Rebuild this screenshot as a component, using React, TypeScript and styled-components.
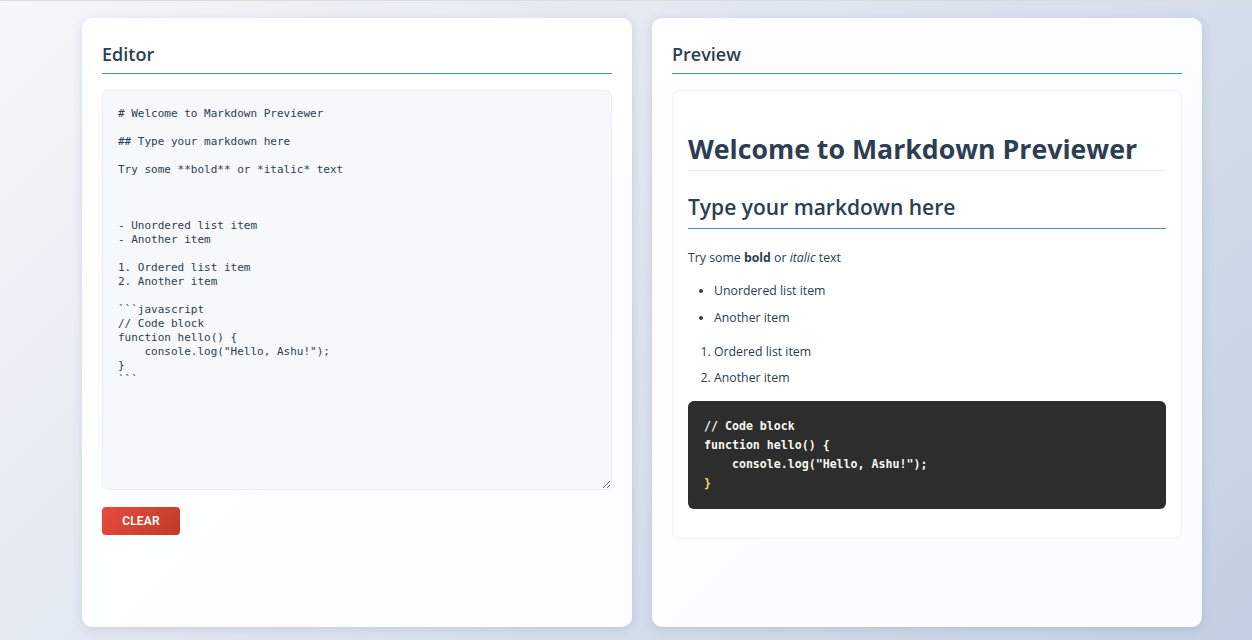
import React, { useState } from "react";
import styled, { createGlobalStyle } from "styled-components";

const GlobalStyle = createGlobalStyle`
  html, body { margin: 0; padding: 0; }
  body {
    font-family: "Open Sans", "Noto Sans", sans-serif;
    background: linear-gradient(135deg, #f5f7fa 0%, #c3cfe2 100%);
    min-height: 640px;
    border-top: 1px solid #dcdcdc;
    box-sizing: border-box;
  }
  * { box-sizing: border-box; }
`;

const Page = styled.div`
  display: flex;
  gap: 20px;
  padding: 17px 50px 0 82px;
  height: 639px;
`;

const Card = styled.section`
  width: 550px;
  height: 609px;
  background: rgba(255, 255, 255, 0.92);
  border-radius: 10px;
  box-shadow: 0 2px 10px rgba(60, 80, 120, 0.15);
  padding: 20px;
  display: flex;
  flex-direction: column;
`;

const Title = styled.h2`
  margin: 0 0 16px;
  font-size: 18px;
  font-weight: 600;
  color: #2c3e50;
  line-height: 28px;
  padding: 2px 0 5px;
  border-bottom: 1px solid #3b8ed0;
`;

const Editor = styled.textarea`
  width: 100%;
  height: 400px;
  resize: vertical;
  background: #f7f8fa;
  border: 1px solid #eceef1;
  border-radius: 6px;
  padding: 16px 15px 15px;
  font-family: "DejaVu Sans Mono", monospace;
  font-size: 11px;
  line-height: 14px;
  color: #2c3e50;
  outline: none;
  display: block;
`;

const ClearButton = styled.button`
  margin-top: 17px;
  align-self: flex-start;
  width: 78px;
  height: 28px;
  border: none;
  border-radius: 4px;
  background: linear-gradient(135deg, #e74c3c, #c0392b);
  color: #fff;
  font-family: "Roboto", "Liberation Sans", sans-serif;
  font-weight: 600;
  font-size: 12px;
  letter-spacing: 0.2px;
  cursor: pointer;
`;

const PreviewBox = styled.div`
  border: 1px solid #f1f2f4;
  border-radius: 8px;
  background: #fff;
  padding: 15px 15px 29px;
  color: #2c3e50;
  font-size: 12.3px;
`;

const H1 = styled.h1`
  margin: 25px 0 0;
  font-size: 26.7px;
  font-weight: 700;
  line-height: 35px;
  padding-bottom: 4px;
  border-bottom: 1px solid #eaecef;
`;

const H2 = styled.h2`
  margin: 20px 0 0;
  font-size: 21px;
  font-weight: 600;
  line-height: 32px;
  padding-bottom: 5px;
  border-bottom: 1px solid #3b8ed0;
`;

const P = styled.p`
  margin: 18px 0 0;
  line-height: 22px;
`;

const List = styled.ul`
  margin: 12px 0 0;
  padding-left: 26px;
  line-height: 20px;
  li { margin-bottom: 7px; }
`;

const OList = styled.ol`
  margin: 14px 0 0;
  padding-left: 26px;
  line-height: 20px;
  li { margin-bottom: 6px; }
`;

const CodeBlock = styled.pre`
  margin: 13px 0 0;
  background: #2d2d2d;
  color: #f8f8f2;
  border-radius: 6px;
  padding: 16px;
  font-family: "DejaVu Sans Mono", monospace;
  font-size: 11.6px;
  font-weight: 700;
  line-height: 19px;
`;

const Brace = styled.span`
  color: #f5d76e;
`;

const initial = `# Welcome to Markdown Previewer

## Type your markdown here

Try some **bold** or *italic* text



- Unordered list item
- Another item

1. Ordered list item
2. Another item

\`\`\`javascript
// Code block
function hello() {
    console.log("Hello, Ashu!");
}
\`\`\``;

export default function App() {
  const [text, setText] = useState(initial);
  return (
    <>
      <GlobalStyle />
      <Page>
        <Card>
          <Title>Editor</Title>
          <Editor value={text} onChange={(e) => setText(e.target.value)} spellCheck={false} />
          <ClearButton onClick={() => setText("")}>CLEAR</ClearButton>
        </Card>
        <Card>
          <Title>Preview</Title>
          <PreviewBox>
            <H1>Welcome to Markdown Previewer</H1>
            <H2>Type your markdown here</H2>
            <P>
              Try some <strong>bold</strong> or <em>italic</em> text
            </P>
            <List>
              <li>Unordered list item</li>
              <li>Another item</li>
            </List>
            <OList>
              <li>Ordered list item</li>
              <li>Another item</li>
            </OList>
            <CodeBlock>
              {"// Code block\nfunction hello() {\n    console.log(\"Hello, Ashu!\");\n"}
              <Brace>{"}"}</Brace>
            </CodeBlock>
          </PreviewBox>
        </Card>
      </Page>
    </>
  );
}
